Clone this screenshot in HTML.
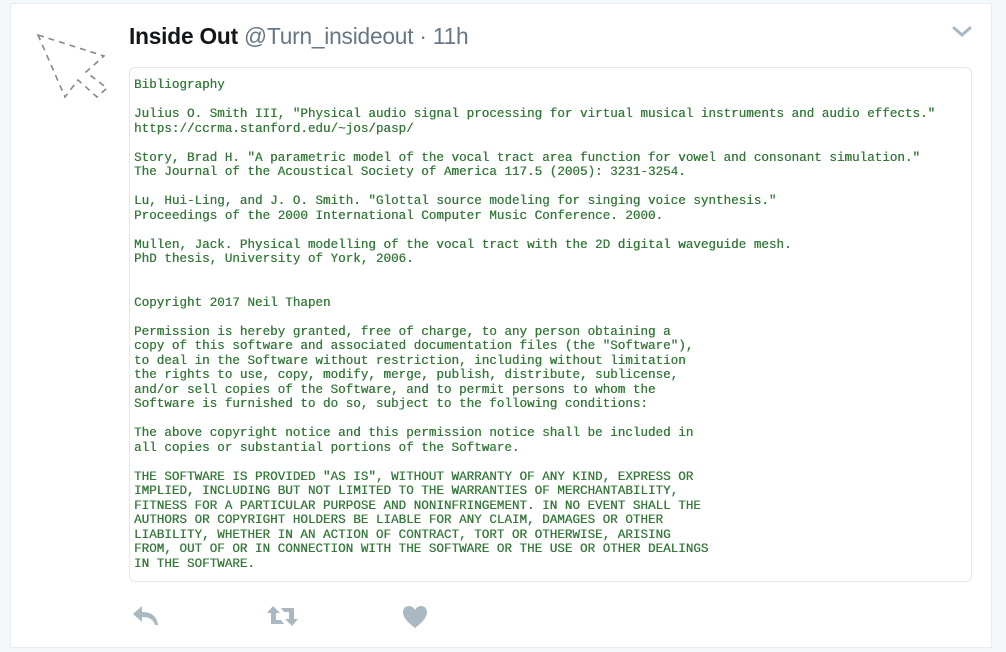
<!DOCTYPE html>
<html><head><meta charset="utf-8"><style>
html,body{margin:0;padding:0;}
body{width:1006px;height:652px;background:#f5f8fa;position:relative;overflow:hidden;font-family:"Liberation Sans",Arial,sans-serif;}
.card{position:absolute;left:10px;top:3px;width:982px;height:645px;background:#fff;border:1px solid #e6ecf0;box-sizing:border-box;}
.name{position:absolute;left:129px;top:23px;font-size:22.7px;color:#14171a;white-space:nowrap;letter-spacing:-0.2px;}
.name b{font-weight:bold;}
.name span{color:#657786;}
pre{position:absolute;left:129px;top:67px;width:843px;height:515px;box-sizing:border-box;margin:0;border:1px solid #e1e8ed;border-radius:6px;padding:10px 0 0 4px;font-family:"Liberation Mono","Courier New",monospace;font-size:12.6px;line-height:14.5px;color:#35783a;background:#fff;text-shadow:0.3px 0 0 #35783a;}
</style></head><body>
<div class="card"></div>
<svg style="position:absolute;left:36px;top:32px" width="76" height="68" viewBox="0 0 76 68">
<path d="M2 3 L68 24 L50 40 L71 56 L61 65 L42 48 L29 65 Z" fill="none" stroke="#888" stroke-width="1.6" stroke-dasharray="6 5"/>
</svg>
<div class="name"><b>Inside Out</b> <span>@Turn_insideout · 11h</span></div>
<svg style="position:absolute;left:952px;top:26px" width="20" height="12" viewBox="0 0 20 12"><path d="M2 2 L10 9 L18 2" fill="none" stroke="#aab8c2" stroke-width="3" stroke-linecap="round"/></svg>
<pre>Bibliography

Julius O. Smith III, "Physical audio signal processing for virtual musical instruments and audio effects."
https://ccrma.stanford.edu/~jos/pasp/

Story, Brad H. "A parametric model of the vocal tract area function for vowel and consonant simulation."
The Journal of the Acoustical Society of America 117.5 (2005): 3231-3254.

Lu, Hui-Ling, and J. O. Smith. "Glottal source modeling for singing voice synthesis."
Proceedings of the 2000 International Computer Music Conference. 2000.

Mullen, Jack. Physical modelling of the vocal tract with the 2D digital waveguide mesh.
PhD thesis, University of York, 2006.


Copyright 2017 Neil Thapen

Permission is hereby granted, free of charge, to any person obtaining a
copy of this software and associated documentation files (the "Software"),
to deal in the Software without restriction, including without limitation
the rights to use, copy, modify, merge, publish, distribute, sublicense,
and/or sell copies of the Software, and to permit persons to whom the
Software is furnished to do so, subject to the following conditions:

The above copyright notice and this permission notice shall be included in
all copies or substantial portions of the Software.

THE SOFTWARE IS PROVIDED "AS IS", WITHOUT WARRANTY OF ANY KIND, EXPRESS OR
IMPLIED, INCLUDING BUT NOT LIMITED TO THE WARRANTIES OF MERCHANTABILITY,
FITNESS FOR A PARTICULAR PURPOSE AND NONINFRINGEMENT. IN NO EVENT SHALL THE
AUTHORS OR COPYRIGHT HOLDERS BE LIABLE FOR ANY CLAIM, DAMAGES OR OTHER
LIABILITY, WHETHER IN AN ACTION OF CONTRACT, TORT OR OTHERWISE, ARISING
FROM, OUT OF OR IN CONNECTION WITH THE SOFTWARE OR THE USE OR OTHER DEALINGS
IN THE SOFTWARE.</pre>
<svg style="position:absolute;left:132px;top:605px" width="28" height="22" viewBox="0 0 28 22"><path d="M10 1 L1 9 L10 17 L10 12 C17 12 21 14 23 20 L26 20 C25 11 19 7 10 7 Z" fill="#aab8c2"/></svg>
<svg style="position:absolute;left:266px;top:605px" width="33" height="22" viewBox="0 0 33 22"><path d="M7 1 L1 8 H5 V19 H18 L15 15 H10 V8 H14 Z M26 21 L32 14 H28 V3 H15 L18 7 H23 V14 H19 Z" fill="#aab8c2"/></svg>
<svg style="position:absolute;left:402px;top:605px" width="26" height="24" viewBox="0 0 26 24"><path d="M13 23 C5 17 1 12 1 7 C1 3 4 1 7 1 C10 1 12 3 13 5 C14 3 16 1 19 1 C22 1 25 3 25 7 C25 12 21 17 13 23 Z" fill="#aab8c2"/></svg>
</body></html>
